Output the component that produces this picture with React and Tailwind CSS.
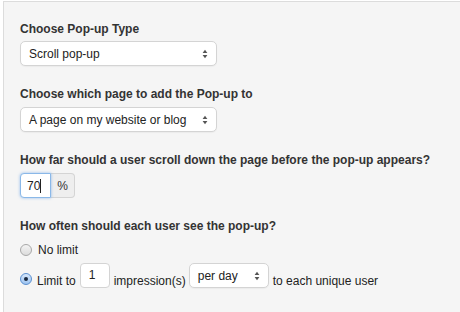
import React from "react";

function Arrows() {
  return (
    <svg width="6" height="10" viewBox="0 0 6 10" className="shrink-0">
      <path d="M3 0.8 L5.4 4 H0.6 Z" fill="#555" />
      <path d="M3 9.2 L5.4 6 H0.6 Z" fill="#555" />
    </svg>
  );
}

function Select({ text, w }) {
  return (
    <div
      className={`flex items-center justify-between h-[25px] ${w} rounded-[5px] border border-[#d4d4d4] bg-white pl-[8px] pr-[8px] text-[12px] text-[#222] shadow-[0_1px_1px_rgba(0,0,0,0.04)]`}
    >
      <span>{text}</span>
      <Arrows />
    </div>
  );
}

function Label({ children, className = "" }) {
  return <div className={`text-[12px] font-bold text-[#333] leading-[16px] whitespace-nowrap ${className}`}>{children}</div>;
}

export default function App() {
  return (
    <div className="w-[460px] h-[312px] overflow-hidden bg-white pl-[3px] pt-[1px]" style={{ fontFamily: '"Helvetica Neue", Helvetica, "Liberation Sans", Arial, sans-serif' }}>
      <div className="h-[320px] bg-[#f5f5f5] border-l border-t border-[#dcdcdc] pl-[16px] pt-[19px]">
        <Label>Choose Pop-up Type</Label>
        <div className="mt-[4px]">
          <Select text="Scroll pop-up" w="w-[197px]" />
        </div>
        <Label className="mt-[20px]">Choose which page to add the Pop-up to</Label>
        <div className="mt-[5px]">
          <Select text="A page on my website or blog" w="w-[197px]" />
        </div>
        <Label className="mt-[20px]">How far should a user scroll down the page before the pop-up appears?</Label>
        <div className="mt-[5px] flex">
          <div className="w-[31px] h-[25px] rounded-l-[4px] border border-[#8ab8e8] bg-white flex items-center pl-[6px] text-[12px] text-[#222] shadow-[0_0_3px_rgba(80,150,230,0.6)] z-10">
            70<span className="inline-block w-px h-[14px] bg-[#222]" />
          </div>
          <div className="w-[24px] h-[25px] rounded-r-[4px] border border-l-0 border-[#d4d4d4] bg-[#eeeeee] flex items-center justify-center text-[12px] text-[#333]">
            %
          </div>
        </div>
        <Label className="mt-[20px]">How often should each user see the pop-up?</Label>
        <div className="mt-[8px] flex items-center h-[16px] gap-[6px] text-[12px] text-[#222]">
          <span className="w-[12px] h-[12px] rounded-full border border-[#a8a8a8] bg-gradient-to-b from-[#f4f4f4] to-[#dcdcdc]" />
          <span>No limit</span>
        </div>
        <div className="mt-[5px] flex items-start text-[12px] text-[#222]">
          <span className="mt-[10px] w-[12px] h-[12px] rounded-full border border-[#5a8fd0] bg-gradient-to-b from-[#d8e8fb] to-[#9cc3f0] flex items-center justify-center mr-[5px]">
            <span className="w-[4px] h-[4px] rounded-full bg-[#1a2a40]" />
          </span>
          <span className="mt-[9px]">Limit to</span>
          <div className="ml-[4px] w-[30px] h-[25px] rounded-[4px] border border-[#d4d4d4] bg-white pl-[8px] pt-[2px] text-[12px]">1</div>
          <span className="ml-[4px] mt-[9px]">impression(s)</span>
          <div className="ml-[3px]">
            <Select text="per day" w="w-[80px]" />
          </div>
          <span className="ml-[4px] mt-[9px]">to each unique user</span>
        </div>
      </div>
    </div>
  );
}
